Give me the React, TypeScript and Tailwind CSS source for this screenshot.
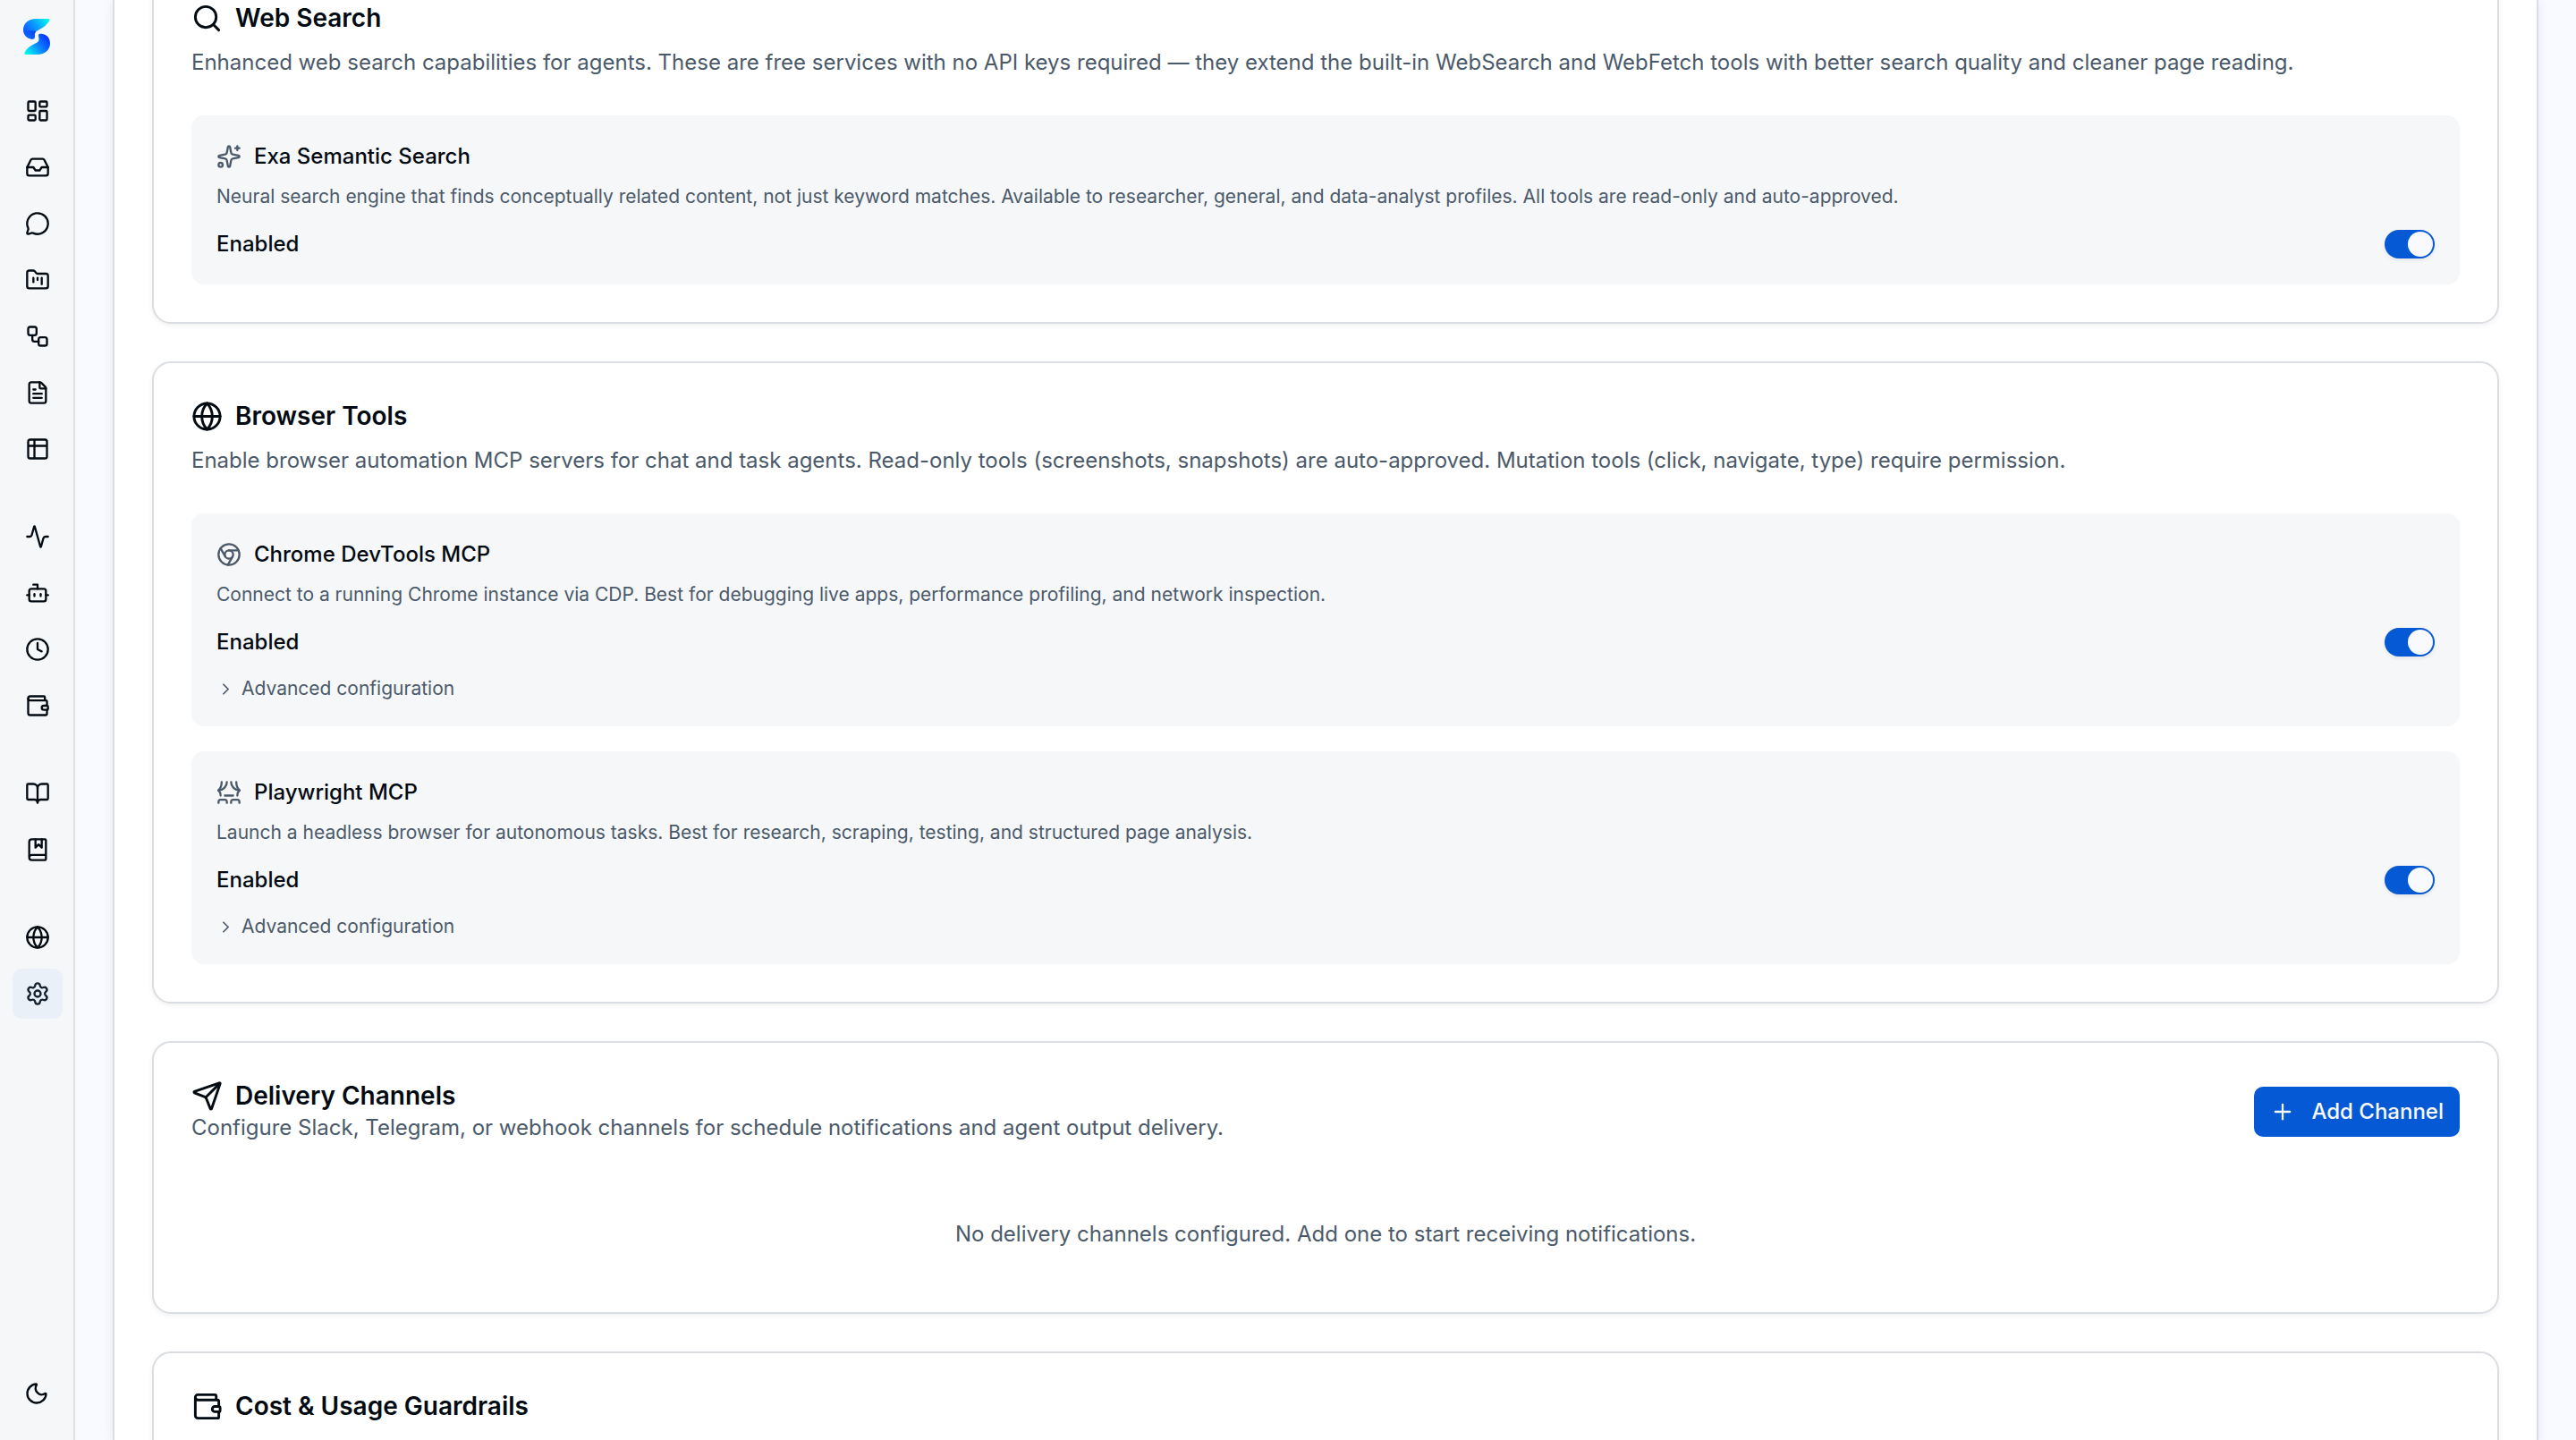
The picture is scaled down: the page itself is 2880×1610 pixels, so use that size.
import { useId } from "react";
import type { ReactNode } from "react";
import {
  Activity,
  BookMarked,
  BookOpen,
  Bot,
  ChevronRight,
  Chromium,
  Clock,
  FileText,
  FolderKanban,
  Globe,
  Inbox,
  LayoutDashboard,
  MessageCircle,
  Moon,
  Plus,
  Search,
  Send,
  Settings,
  Sparkles,
  Table2,
  Theater,
  Wallet,
  Workflow,
  type LucideIcon,
} from "lucide-react";

type NavItem = { label: string; icon: LucideIcon; active?: boolean };

const navGroups: NavItem[][] = [
  [
    { label: "Dashboard", icon: LayoutDashboard },
    { label: "Inbox", icon: Inbox },
    { label: "Chat", icon: MessageCircle },
    { label: "Projects", icon: FolderKanban },
    { label: "Workflows", icon: Workflow },
    { label: "Documents", icon: FileText },
    { label: "Tables", icon: Table2 },
  ],
  [
    { label: "Monitor", icon: Activity },
    { label: "Profiles", icon: Bot },
    { label: "Schedules", icon: Clock },
    { label: "Cost & Usage", icon: Wallet },
  ],
  [
    { label: "Guide", icon: BookOpen },
    { label: "Playbook", icon: BookMarked },
  ],
  [
    { label: "Environment", icon: Globe },
    { label: "Settings", icon: Settings, active: true },
  ],
];

function Logo() {
  return (
    <svg viewBox="0 0 30 40" className="h-10 w-[30px]" aria-hidden="true">
      <defs>
        <linearGradient id="logo-top" x1="29" y1="1" x2="4" y2="20" gradientUnits="userSpaceOnUse">
          <stop offset="0" stopColor="#00fff0" />
          <stop offset="0.5" stopColor="#0a9dff" />
          <stop offset="1" stopColor="#0a50ff" />
        </linearGradient>
        <linearGradient id="logo-bottom" x1="3" y1="39" x2="26" y2="20" gradientUnits="userSpaceOnUse">
          <stop offset="0" stopColor="#00fff0" />
          <stop offset="0.5" stopColor="#0a8dff" />
          <stop offset="1" stopColor="#0838ff" />
        </linearGradient>
        <linearGradient id="logo-fold" x1="14" y1="12" x2="6" y2="22" gradientUnits="userSpaceOnUse">
          <stop offset="0" stopColor="#0838f0" />
          <stop offset="1" stopColor="#0a6bff" />
        </linearGradient>
      </defs>
      <path d="M28.5 0C30 .4 29.4 2 28.4 3.400C24 9.500 18 11.500 14.500 14C12 16 13.500 19 12.300 22C10 24 0 21.500 0 12.500C0 5 6 0 14 0Z" fill="url(#logo-top)" />
      <path d="M1 15.500C4 13 9 12.500 14.500 14C12 16 13.500 19 12.300 22C9 23.800 2.500 21 1 15.500Z" fill="url(#logo-fold)" />
      <path d="M17.500 17C22 15.500 30 18.500 30 27.500C30 35 24 40 16 40H3C1 40 .8 38.500 2 36.700C6 30.500 12 28.500 15.500 26.500C19.500 24 16 20 17.500 17Z" fill="url(#logo-bottom)" />
    </svg>
  );
}

function NavLink({ label, icon: Icon, active }: NavItem) {
  return (
    <a
      href="#"
      aria-label={label}
      aria-current={active ? "page" : undefined}
      className={`flex size-14 items-center justify-center rounded-[10px] ${
        active ? "bg-[#eaf0f8] text-[#12222f]" : "text-[#020a12]"
      }`}
    >
      <Icon className="size-7" />
    </a>
  );
}

function Sidebar() {
  return (
    <aside className="flex w-[84px] shrink-0 flex-col items-center border-r-2 border-[#dfe2e5] bg-[#f6f7f9] pt-[21px] pb-6">
      <a href="#" aria-label="Home" className="mb-[35px]">
        <Logo />
      </a>
      <nav className="flex flex-col gap-[42px] pl-[2px]">
        {navGroups.map((group, i) => (
          <div key={i} className="flex flex-col gap-[7px]">
            {group.map((item) => (
              <NavLink key={item.label} {...item} />
            ))}
          </div>
        ))}
      </nav>
      <button
        type="button"
        aria-label="Toggle theme"
        className="mt-auto flex size-14 items-center justify-center text-[#020a12]"
      >
        <Moon className="size-7" />
      </button>
    </aside>
  );
}

function Card({ children }: { children: ReactNode }) {
  return (
    <section className="rounded-[21px] border-2 border-[#dadee3] bg-white p-[42px] shadow-[0_2px_6px_rgba(15,23,42,0.06)]">
      {children}
    </section>
  );
}

function CardTitle({ icon: Icon, children }: { icon: LucideIcon; children: ReactNode }) {
  return (
    <h2 className="flex items-center gap-[14px] text-[28px] leading-[35px] font-semibold">
      <Icon className="size-[35px]" />
      {children}
    </h2>
  );
}

function Description({ children }: { children: ReactNode }) {
  return <p className="text-[24px] leading-[35px] text-[#4b5a6a]">{children}</p>;
}

function Switch({ id }: { id: string }) {
  return (
    <input
      id={id}
      type="checkbox"
      role="switch"
      defaultChecked
      className="flex h-8 w-14 cursor-pointer appearance-none items-center rounded-full bg-[#c9d0d8] p-[2px] shadow-[0_2px_4px_rgba(15,23,42,0.08)] before:size-7 before:rounded-full before:bg-[#f8faff] checked:justify-end checked:bg-[#0559d4]"
    />
  );
}

type ToolPanelProps = {
  icon: LucideIcon;
  name: string;
  description: string;
  advanced?: boolean;
};

function ToolPanel({ icon: Icon, name, description, advanced }: ToolPanelProps) {
  const id = useId();
  return (
    <div className="flex flex-col gap-[21px] rounded-[14px] bg-[#f6f7f9] p-7">
      <div className="flex flex-col gap-[14px]">
        <h3 className="flex items-center gap-[14px] text-[24px] leading-[35px] font-medium">
          <Icon className="size-7 text-[#4b5a6a]" />
          {name}
        </h3>
        <p className="text-[21px] leading-7 text-[#4b5a6a]">{description}</p>
      </div>
      <div className="flex items-center justify-between">
        <label htmlFor={id} className="text-[24px] leading-[35px] font-medium">
          Enabled
        </label>
        <Switch id={id} />
      </div>
      {advanced && (
        <button
          type="button"
          className="flex items-center gap-[7px] self-start text-[21px] leading-7 text-[#4b5a6a]"
        >
          <ChevronRight className="size-[21px]" />
          Advanced configuration
        </button>
      )}
    </div>
  );
}

export default function App() {
  return (
    <div className="flex h-screen overflow-hidden bg-[#f8faff] font-[Inter,sans-serif] text-[#020a12]">
      <Sidebar />
      <main className="flex-1 px-[42px]">
        <div className="flow-root h-full border-x-2 border-[#dadee3] bg-white px-[42px] shadow-[0_2px_12px_rgba(15,23,42,0.08)]">
          {/* settings list, scrolled part of the way down */}
          <div className="-mt-[41px] flex flex-col gap-[42px]">
            <Card>
              <div className="mb-[42px] flex flex-col gap-[14px]">
                <CardTitle icon={Search}>Web Search</CardTitle>
                <Description>
                  Enhanced web search capabilities for agents. These are free services with no API
                  keys required — they extend the built-in WebSearch and WebFetch tools with better
                  search quality and cleaner page reading.
                </Description>
              </div>
              <ToolPanel
                icon={Sparkles}
                name="Exa Semantic Search"
                description="Neural search engine that finds conceptually related content, not just keyword matches. Available to researcher, general, and data-analyst profiles. All tools are read-only and auto-approved."
              />
            </Card>

            <Card>
              <div className="mb-[42px] flex flex-col gap-[14px]">
                <CardTitle icon={Globe}>Browser Tools</CardTitle>
                <Description>
                  Enable browser automation MCP servers for chat and task agents. Read-only tools
                  (screenshots, snapshots) are auto-approved. Mutation tools (click, navigate, type)
                  require permission.
                </Description>
              </div>
              <div className="flex flex-col gap-7">
                <ToolPanel
                  icon={Chromium}
                  name="Chrome DevTools MCP"
                  description="Connect to a running Chrome instance via CDP. Best for debugging live apps, performance profiling, and network inspection."
                  advanced
                />
                <ToolPanel
                  icon={Theater}
                  name="Playwright MCP"
                  description="Launch a headless browser for autonomous tasks. Best for research, scraping, testing, and structured page analysis."
                  advanced
                />
              </div>
            </Card>

            <Card>
              <div className="flex items-center justify-between">
                <div>
                  <CardTitle icon={Send}>Delivery Channels</CardTitle>
                  <Description>
                    Configure Slack, Telegram, or webhook channels for schedule notifications and
                    agent output delivery.
                  </Description>
                </div>
                <button
                  type="button"
                  className="flex h-14 items-center gap-[18px] rounded-[10px] bg-[#0559d4] px-[18px] text-[24px] font-medium text-[#f8faff]"
                >
                  <Plus className="size-7" />
                  Add Channel
                </button>
              </div>
              <div className="pt-[84px] pb-7 text-center">
                <Description>
                  No delivery channels configured. Add one to start receiving notifications.
                </Description>
              </div>
            </Card>

            <Card>
              <div className="pb-[42px]">
                <CardTitle icon={Wallet}>Cost &amp; Usage Guardrails</CardTitle>
              </div>
            </Card>
          </div>
        </div>
      </main>
    </div>
  );
}
